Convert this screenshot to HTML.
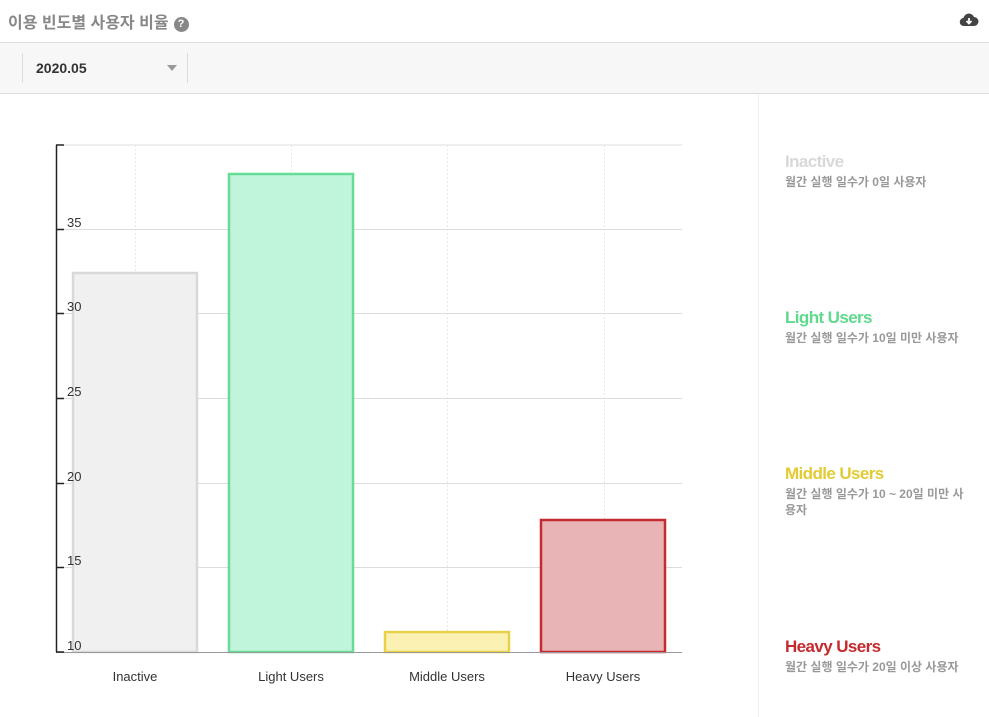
<!DOCTYPE html><html><head><meta charset="utf-8"><style>
body{margin:0;width:989px;height:717px;background:#fff;font-family:"Liberation Sans","Noto Sans CJK KR",sans-serif;position:relative;overflow:hidden}
.hdr{position:absolute;left:0;top:0;width:989px;height:42px;border-bottom:1px solid #ddd}
.title{position:absolute;left:8px;top:9px;font-size:16px;font-weight:bold;color:#888}
.q{display:inline-block;width:15px;height:15px;border-radius:50%;background:#888;color:#fff;font-size:11px;text-align:center;line-height:15px;vertical-align:1px;margin-left:5px}
.bar{position:absolute;left:0;top:43px;width:989px;height:50px;background:#f7f7f7;border-bottom:1px solid #ddd}
.sel{position:absolute;left:22px;top:10px;width:164px;height:30px;border-left:1px solid #ddd;border-right:1px solid #ddd}
.sel span{position:absolute;left:13px;top:7px;font-size:14px;font-weight:bold;color:#333}
.tri{position:absolute;left:144px;top:12px;border-left:5px solid transparent;border-right:5px solid transparent;border-top:6px solid #999}
.rp{position:absolute;left:758px;top:94px;width:231px;height:623px;border-left:1px solid #eee}
.lg{position:absolute;left:26px;font-size:12px;color:#999;line-height:16px;font-weight:bold}
.lg b{display:block;font-size:17px;margin-bottom:4px;letter-spacing:-0.6px}
</style></head><body>
<div class="hdr"><div class="title">이용 빈도별 사용자 비율<span class="q">?</span></div>
<svg style="position:absolute;left:959px;top:11px" width="20" height="18" viewBox="0 0 20 18"><path d="M5 15a4 4 0 0 1-.5-8A5.5 5.5 0 0 1 15 6a4 4 0 0 1 0 9z" fill="#444"/><path d="M10 7v5M7.5 10l2.5 2.5 2.5-2.5" stroke="#fff" stroke-width="1.8" fill="none"/></svg></div>
<div class="bar"><div class="sel"><span>2020.05</span><div class="tri"></div></div></div>
<svg style="position:absolute;left:0;top:0" width="758" height="717">
<g stroke="#ddd" stroke-width="1">
<line x1="56" y1="145" x2="682" y2="145"/><line x1="56" y1="229.5" x2="682" y2="229.5"/><line x1="56" y1="313.5" x2="682" y2="313.5"/><line x1="56" y1="398.5" x2="682" y2="398.5"/><line x1="56" y1="483.5" x2="682" y2="483.5"/><line x1="56" y1="567.5" x2="682" y2="567.5"/>
</g>
<g stroke="#e8e8e8" stroke-dasharray="2,2"><line x1="135.5" y1="145" x2="135.5" y2="652"/><line x1="291.5" y1="145" x2="291.5" y2="652"/><line x1="447.5" y1="145" x2="447.5" y2="652"/><line x1="604.5" y1="145" x2="604.5" y2="652"/></g>
<rect x="73" y="273" width="124" height="379" fill="#f0f0f0" stroke="#d9d9d9" stroke-width="2.5"/>
<rect x="229" y="174" width="124" height="478" fill="#c0f5dc" stroke="#66dd96" stroke-width="2.5"/>
<rect x="385" y="632" width="124" height="20" fill="#fbf1b3" stroke="#e8d149" stroke-width="2.5"/>
<rect x="541" y="520" width="124" height="132" fill="#e8b4b6" stroke="#c42a2e" stroke-width="2.5"/>
<line x1="56" y1="652.5" x2="682" y2="652.5" stroke="#999"/>
<g stroke="#222" stroke-width="1.5"><line x1="56.5" y1="145" x2="56.5" y2="652"/><line x1="56" y1="145" x2="64" y2="145"/><line x1="56" y1="229.5" x2="64" y2="229.5"/><line x1="56" y1="313.5" x2="64" y2="313.5"/><line x1="56" y1="398.5" x2="64" y2="398.5"/><line x1="56" y1="483.5" x2="64" y2="483.5"/><line x1="56" y1="567.5" x2="64" y2="567.5"/><line x1="56" y1="652" x2="64" y2="652"/></g>
<g font-size="13" fill="#333" font-family="Liberation Sans,sans-serif"><text x="67" y="227">35</text><text x="67" y="311">30</text><text x="67" y="396">25</text><text x="67" y="481">20</text><text x="67" y="565">15</text><text x="67" y="650">10</text></g>
<g font-size="13" fill="#333" text-anchor="middle" font-family="Liberation Sans,sans-serif"><text x="135" y="681">Inactive</text><text x="291" y="681">Light Users</text><text x="447" y="681">Middle Users</text><text x="603" y="681">Heavy Users</text></g>
</svg>
<div class="rp">
<div class="lg" style="top:60px"><b style="color:#d8d8d8">Inactive</b>월간 실행 일수가 0일 사용자</div>
<div class="lg" style="top:216px"><b style="color:#5fd98e">Light Users</b>월간 실행 일수가 10일 미만 사용자</div>
<div class="lg" style="top:372px;width:185px"><b style="color:#e2cb33">Middle Users</b>월간 실행 일수가 10 ~ 20일 미만 사용자</div>
<div class="lg" style="top:545px"><b style="color:#c42a2e">Heavy Users</b>월간 실행 일수가 20일 이상 사용자</div>
</div>
</body></html>
